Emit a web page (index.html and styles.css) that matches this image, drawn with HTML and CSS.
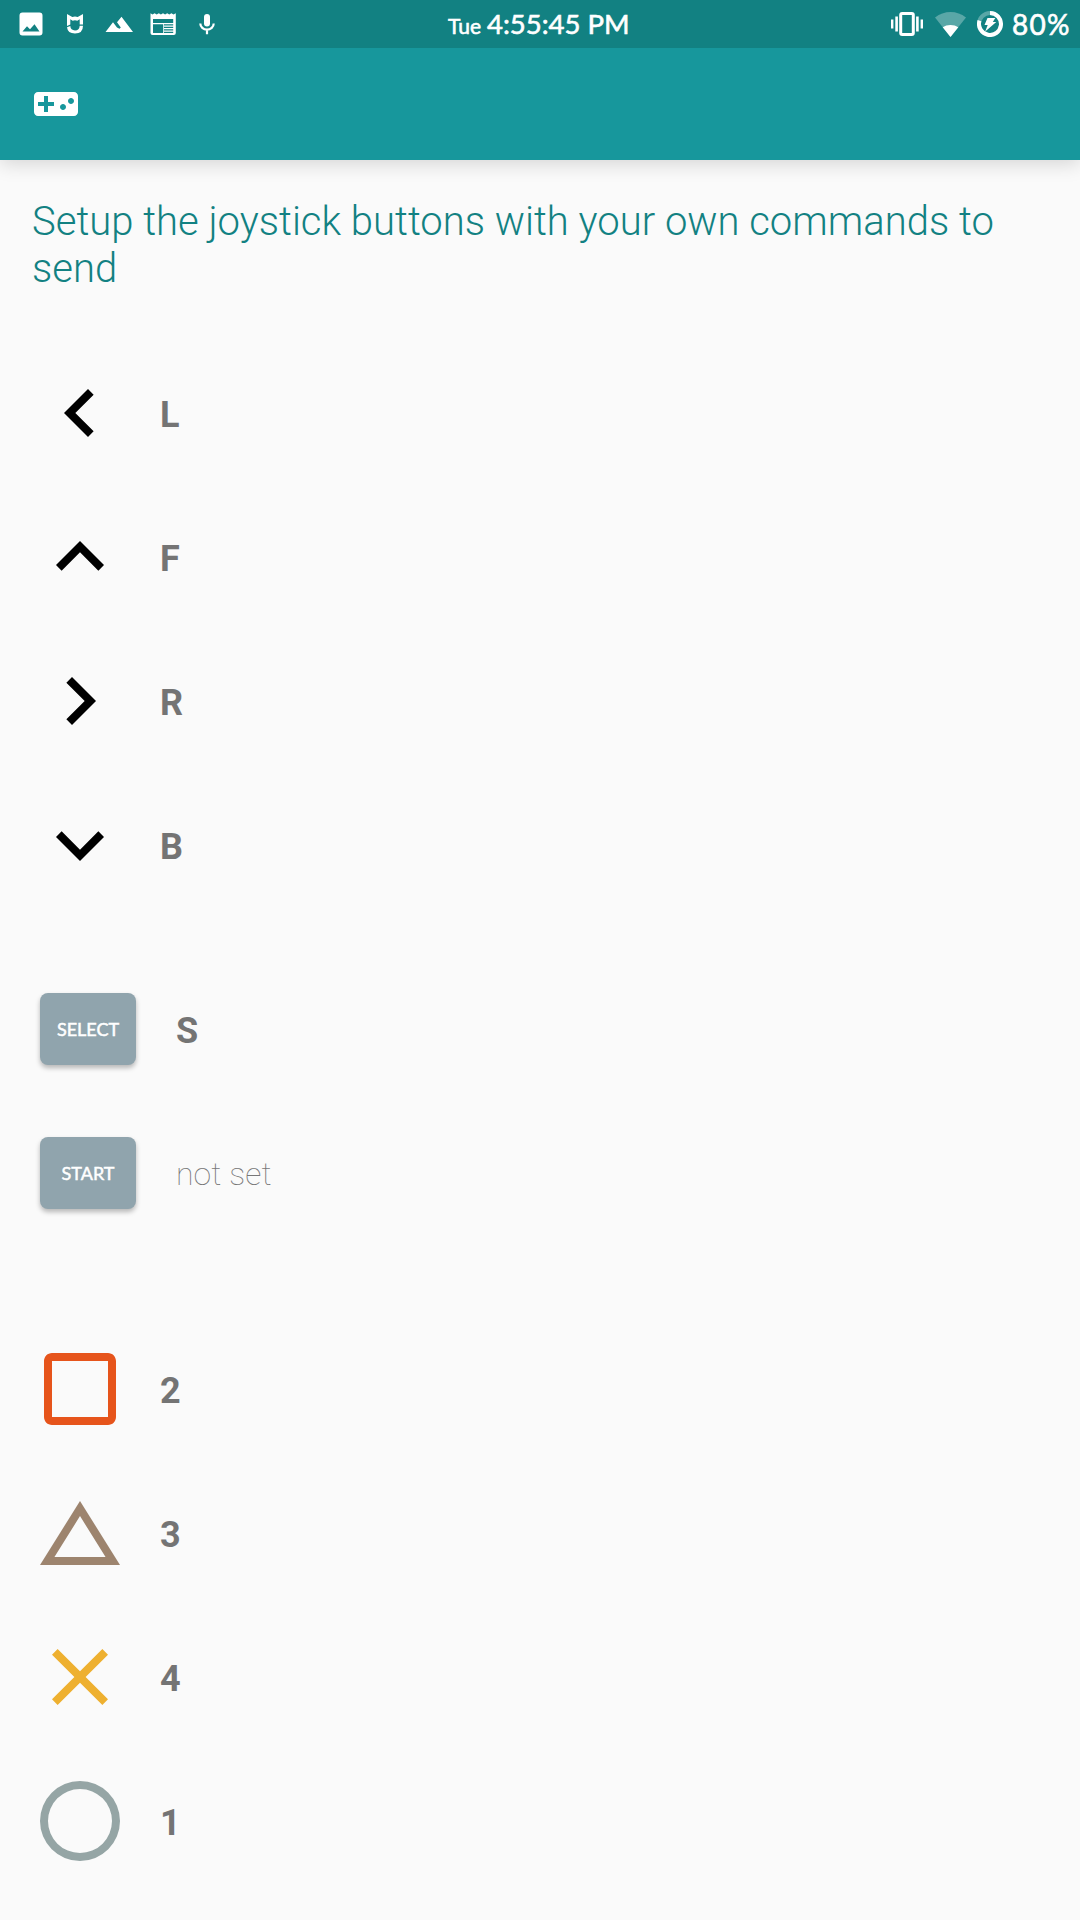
FILE: index.html
```html
<!DOCTYPE html>
<html lang="en">
<head>
<meta charset="utf-8">
<title>Joystick setup</title>
<link rel="stylesheet" href="styles.css">
</head>
<body>
<header class="status">
  <div class="status-left">
    <svg viewBox="0 0 36 36"><path fill-rule="evenodd" d="M9.500 6.500H26.500a3 3 0 0 1 3 3V26.500a3 3 0 0 1-3 3H9.500a3 3 0 0 1-3-3V9.500a3 3 0 0 1 3-3zM9.500 25.500H26.500L21.500 18.200 17 23.300 14 20.300z"/></svg>
    <svg viewBox="0 0 36 36"><path d="M10 8l5.300 3q2.700-1 5.400 0L26 8v10.500h-3.300V13.200L20.300 14.700q-2.300-1-4.600 0L13.300 13.200v5.300L10 20zM10 21.300l3.300-1.200q.3 4.400 4.700 4.400t4.700-4.700H26q0 7.700-8 7.700-7.400 0-8-6.200z"/></svg>
    <svg viewBox="0 0 36 36"><path d="M4.500 26L12 16.200 16 21.500 18.500 22.700 19.800 21.500 16 16.200 20.500 10.700 32 26z"/></svg>
    <svg viewBox="0 0 36 36"><path fill-rule="evenodd" d="M5.500 7.300l2 1.200 2.100-1.200 2.100 1.200 2.100-1.200 2.100 1.200 2.100-1.200 2.100 1.200 2.100-1.200 2.100 1.200 2.100-1.200 2.100 1.200 2.300-1.200V27a2 2 0 0 1-2 2H7.500a2 2 0 0 1-2-2zM8 13v4H28.200V13zM8 18.300V27H18.200V18.300zM19 18.300v1.200h9.200v-1.200zM19 20.800V22h9.200v-1.200zM19 23.300v1.200h9.200v-1.200zM19 25.800V27h9.200v-1.200z"/></svg>
    <svg viewBox="0 0 36 36"><rect x="15" y="8" width="6" height="12.500" rx="3"/><path class="mic" d="M11.300 17.500a6.700 6.200 0 0 0 13.400 0M18 23.700V28.300"/></svg>
  </div>
  <div class="clock"><span class="day">Tue</span><span class="time">4:55:45 PM</span></div>
  <div class="status-right">
    <svg class="vibrate" viewBox="0 0 32 24"><rect class="phone" x="9.700" y="1.500" width="12.600" height="21" rx="1.500"/><path d="M0 7.500h2.400v9H0zM4.300 4.500h2.600v15H4.300zM25.100 4.500h2.600v15h-2.600zM29.600 7.500H32v9h-2.400z"/></svg>
    <svg class="wifi" viewBox="0 0 31 25"><path class="dim" d="M15.500 25L0 5.500Q7 0 15.500 0T31 5.500z"/><path d="M15.500 25L7.700 15.200Q11 13 15.500 13T23.300 15.200z"/></svg>
    <svg class="battery" viewBox="0 0 26 26"><circle class="ring dim" cx="13" cy="13" r="11"/><path class="ring" d="M13 2A11 11 0 1 1 2.500 9.700"/><path d="M10.500 7h7.800l-2.500 4h3.500L8.200 20.500l2.500-6.500H7.500z"/></svg>
    <span class="percent">80%</span>
  </div>
</header>
<nav class="appbar">
  <svg viewBox="0 0 24 24"><path d="M21 6H3c-1.100 0-2 .9-2 2v8c0 1.100.9 2 2 2h18c1.100 0 2-.9 2-2V8c0-1.100-.9-2-2-2zm-10 7H8v3H6v-3H3v-2h3V8h2v3h3v2zm4.500 2c-.83 0-1.500-.67-1.500-1.500s.67-1.500 1.500-1.500 1.500.67 1.500 1.500-.67 1.500-1.500 1.500zm4-3c-.83 0-1.500-.67-1.500-1.500S18.670 9 19.500 9s1.500.67 1.500 1.500-.67 1.500-1.500 1.500z"/></svg>
</nav>
<main>
  <h1>Setup the joystick buttons with your own commands to send</h1>
  <section class="group">
    <div class="row"><svg viewBox="0 0 24 24"><path d="M15.410 16.590L10.830 12l4.580-4.590L14 6l-6 6 6 6z"/></svg><b>L</b></div>
    <div class="row"><svg viewBox="0 0 24 24"><path d="M12 8l-6 6 1.410 1.410L12 10.830l4.590 4.580L18 14z"/></svg><b>F</b></div>
    <div class="row"><svg viewBox="0 0 24 24"><path d="M8.590 16.590L13.170 12 8.590 7.410 10 6l6 6-6 6z"/></svg><b>R</b></div>
    <div class="row"><svg viewBox="0 0 24 24"><path d="M16.590 8.590L12 13.170 7.410 8.590 6 10l6 6 6-6z"/></svg><b>B</b></div>
  </section>
  <section class="group keys">
    <div class="row"><button>SELECT</button><b>S</b></div>
    <div class="row"><button>START</button><span class="unset">not set</span></div>
  </section>
  <section class="group">
    <div class="row"><svg class="orange" viewBox="0 0 24 24"><path d="M19 5v14H5V5h14m0-2H5c-1.100 0-2 .9-2 2v14c0 1.100.9 2 2 2h14c1.100 0 2-.9 2-2V5c0-1.100-.9-2-2-2z"/></svg><b>2</b></div>
    <div class="row"><svg class="brown" viewBox="0 0 24 24"><path d="M12 7.770L18.390 18H5.610L12 7.770M12 4L2 20h20L12 4z"/></svg><b>3</b></div>
    <div class="row"><svg class="yellow" viewBox="0 0 24 24"><path d="M19 6.410L17.590 5 12 10.590 6.410 5 5 6.410 10.590 12 5 17.590 6.410 19 12 13.410 17.590 19 19 17.590 13.410 12z"/></svg><b>4</b></div>
    <div class="row"><svg class="gray" viewBox="0 0 24 24"><path d="M12 2a10 10 0 1 0 0 20 10 10 0 0 0 0-20zm0 18a8 8 0 1 1 0-16 8 8 0 0 1 0 16z"/></svg><b>1</b></div>
  </section>
</main>
</body>
</html>
```
FILE: styles.css
```css
* { box-sizing: border-box; }
body {
  margin: 0;
  height: 1920px;
  overflow: hidden;
  background: #fafafa;
  font-family: Roboto, sans-serif;
}
svg { display: block; flex: none; }
.status {
  position: relative;
  z-index: 1;
  display: grid;
  grid-template-columns: 448px 1fr auto;
  align-items: center;
  height: 48px;
  padding-right: 9px;
  background: #128182;
  color: #fff;
  fill: #fff;
  font-family: Lato, sans-serif;
  white-space: nowrap;
}
.status-left { display: flex; gap: 8px; padding-left: 13px; }
.status-left svg { width: 36px; height: 36px; margin-top: -2px; }
.mic { fill: none; stroke: #fff; stroke-width: 2.200; }
.clock {
  display: flex;
  align-items: baseline;
  gap: 6px;
  line-height: 48px;
  -webkit-text-stroke: .6px #fff;
}
.day { font-size: 21px; }
.time { font-size: 27.500px; }
.status-right { display: flex; align-items: center; }
.status-right svg { margin-top: -2px; }
.vibrate { width: 32px; height: 24px; margin-right: 12px; }
.wifi { width: 31px; height: 25px; margin-right: 11px; }
.battery { width: 26px; height: 26px; margin-right: 9px; }
.phone { fill: none; stroke: #fff; stroke-width: 3; }
.ring { fill: none; stroke: #fff; stroke-width: 4; }
.dim { opacity: .3; }
.percent {
  width: 59px;
  font-size: 28px;
  letter-spacing: 1.200px;
  line-height: 46px;
  margin-top: -2px;
  -webkit-text-stroke: .6px #fff;
}
.appbar {
  display: flex;
  align-items: center;
  height: 112px;
  padding-left: 32px;
  background: #17979c;
  fill: #fff;
  box-shadow: 0 4px 18px rgba(0, 0, 0, .15);
}
.appbar svg { width: 48px; height: 48px; }
main { padding: 38px 32px 0; }
h1 {
  height: 143px;
  margin: 0;
  color: #128182;
  font-size: 40px;
  font-weight: 300;
  line-height: 47px;
}
.group { padding-bottom: 40px; }
.keys { padding: 0 8px 72px; }
.row { display: flex; align-items: center; gap: 32px; height: 144px; }
.keys .row { gap: 40px; }
.row svg { width: 96px; height: 96px; }
.row b { color: #747474; font-size: 36px; font-weight: 700; line-height: 42px; padding-top: 4px; }
button {
  width: 96px;
  height: 72px;
  padding: 0;
  border: 0;
  border-radius: 8px;
  background: #90a4ad;
  box-shadow: 0 3px 5px rgba(0, 0, 0, .27);
  color: #fff;
  font: 400 18px Lato, sans-serif;
  -webkit-text-stroke: .5px #fff;
}
.unset { color: #777; font-size: 32px; font-weight: 100; letter-spacing: .1px; padding-top: 2px; }
.orange { fill: #e6541b; }
.brown { fill: #9d846e; }
.yellow { fill: #eeb030; }
.gray { fill: #95a5a5; }
```
